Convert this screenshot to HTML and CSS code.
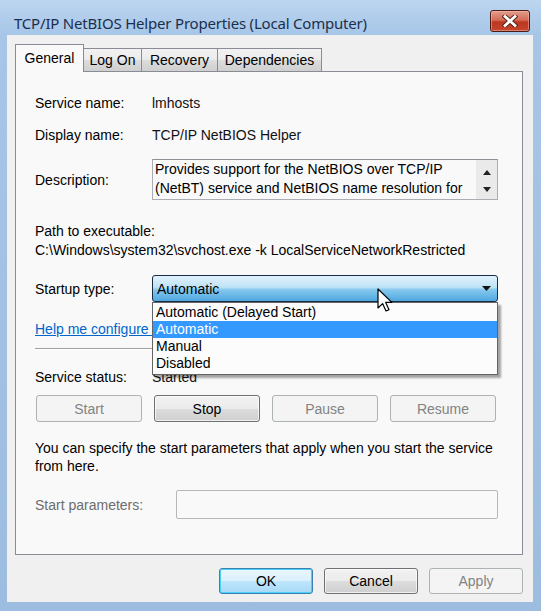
FILE: index.html
```html
<!DOCTYPE html>
<html>
<head>
<meta charset="utf-8">
<link rel="stylesheet" href="styles.css">
</head>
<body>
<div class="window">
  <div class="titlebar">
    <span class="title">TCP/IP NetBIOS Helper Properties (Local Computer)</span>
    <div class="close">
      <svg width="16" height="12" viewBox="0 0 16 12">
        <path d="M3 1.5 L13 10.5 M13 1.5 L3 10.5" stroke="#4a1e16" stroke-width="4.6" stroke-linecap="square"/>
        <path d="M3 1.5 L13 10.5 M13 1.5 L3 10.5" stroke="#ffffff" stroke-width="2.8" stroke-linecap="square"/>
      </svg>
    </div>
  </div>
  <div class="client">
    <div class="tabs">
      <div class="tab active">General</div>
      <div class="tab t-logon">Log On</div>
      <div class="tab t-recovery">Recovery</div>
      <div class="tab t-deps">Dependencies</div>
    </div>
    <div class="panel">
      <div class="row r-service">
        <span class="label">Service name:</span>
        <span class="value">lmhosts</span>
      </div>
      <div class="row r-display">
        <span class="label">Display name:</span>
        <span class="value">TCP/IP NetBIOS Helper</span>
      </div>
      <div class="row r-desc">
        <span class="label">Description:</span>
        <div class="descbox">
          <div class="desctext">Provides support for the NetBIOS over TCP/IP<br>(NetBT) service and NetBIOS name resolution for</div>
          <div class="vscroll">
            <svg width="8" height="5" viewBox="0 0 8 5"><path d="M0 5 L4 0 L8 5 Z" fill="#222"/></svg>
            <svg width="8" height="5" viewBox="0 0 8 5"><path d="M0 0 L4 5 L8 0 Z" fill="#222"/></svg>
          </div>
        </div>
      </div>
      <div class="pathblock">
        <div>Path to executable:</div>
        <div>C:\Windows\system32\svchost.exe -k LocalServiceNetworkRestricted</div>
      </div>
      <div class="row r-startup">
        <span class="label">Startup type:</span>
        <div class="combo">
          <span class="combo-text">Automatic</span>
          <svg class="combo-arrow" width="9" height="5" viewBox="0 0 9 5"><path d="M0 0 L4.5 5 L9 0 Z" fill="#111"/></svg>
          <div class="droplist">
            <div class="item">Automatic (Delayed Start)</div>
            <div class="item selected">Automatic</div>
            <div class="item">Manual</div>
            <div class="item">Disabled</div>
          </div>
          <svg class="cursor" width="16" height="25" viewBox="0 0 16 25">
            <path d="M1 1 L1 20 L5.6 15.6 L9 23 L12 21.7 L8.7 14.4 L14.8 14.4 Z" fill="#fff" stroke="#000" stroke-width="1.2" stroke-linejoin="round"/>
          </svg>
        </div>
      </div>
      <div class="helprow"><a class="help" href="#">Help me configure service startup options.</a></div>
      <div class="sep"></div>
      <div class="row r-status">
        <span class="label">Service status:</span>
        <span class="value">Started</span>
      </div>
      <div class="svcbuttons">
        <div class="btn disabled">Start</div>
        <div class="btn">Stop</div>
        <div class="btn disabled">Pause</div>
        <div class="btn disabled">Resume</div>
      </div>
      <p class="note">You can specify the start parameters that apply when you start the service from here.</p>
      <div class="row r-params">
        <span class="label dim">Start parameters:</span>
        <div class="paraminput"></div>
      </div>
    </div>
    <div class="actions">
      <div class="btn dlg default">OK</div>
      <div class="btn dlg">Cancel</div>
      <div class="btn dlg disabled">Apply</div>
    </div>
  </div>
</div>
</body>
</html>
```

FILE: styles.css
```css
* { box-sizing: border-box; }

html, body {
  margin: 0;
  padding: 0;
}

body {
  width: 541px;
  height: 611px;
  overflow: hidden;
  font-family: "Liberation Sans", Arial, sans-serif;
  font-size: 14px;
  color: #000;
}

.window {
  width: 541px;
  height: 611px;
  display: flex;
  flex-direction: column;
  padding: 0 8px 9px 7px;
  background: linear-gradient(180deg, #bcd5ef 0px, #a6c5e7 36px, #9dbde0 100%);
}

.titlebar {
  height: 35px;
  display: flex;
  justify-content: space-between;
  align-items: flex-start;
}

.title {
  margin-top: 13px;
  padding-left: 7px;
  font-family: "Noto Sans", "Open Sans", sans-serif;
  font-size: 15px;
  line-height: 20px;
  color: #1b2f4d;
  letter-spacing: -0.2px;
}

.close {
  margin-top: 10px;
  margin-right: 3px;
  width: 40px;
  height: 22px;
  border: 1px solid #4b1c14;
  border-radius: 3px;
  background: linear-gradient(180deg, #e39c8c 0%, #d46c57 45%, #bd3620 55%, #c6452c 100%);
  display: flex;
  align-items: center;
  justify-content: center;
  box-shadow: inset 0 0 0 1px rgba(255, 200, 190, 0.45);
}

.client {
  flex: 1;
  background: #f0f0f0;
  padding: 9px 10px 0 8px;
  display: flex;
  flex-direction: column;
}

.tabs {
  display: flex;
  align-items: flex-end;
  height: 28px;
  margin-bottom: -1px;
  position: relative;
  z-index: 2;
}

.tab {
  height: 24px;
  border: 1px solid #898c95;
  margin-left: -1px;
  background: linear-gradient(180deg, #f2f2f2 0%, #ebebeb 50%, #dddddd 51%, #cfcfcf 100%);
  display: flex;
  align-items: center;
  justify-content: center;
  font-size: 14px;
  color: #000;
}

.tab.active {
  margin-left: 0;
  height: 28px;
  width: 69px;
  border-bottom: none;
  background: #f9f9f9;
  padding-bottom: 2px;
  z-index: 2;
}

.t-logon { width: 59px; }
.t-recovery { width: 77px; }
.t-deps { width: 105px; }

.panel {
  height: 484px;
  border: 1px solid #898c95;
  background: #f9f9f9;
  padding: 20px 24px 0 19px;
  display: flex;
  flex-direction: column;
}

.row {
  display: flex;
  align-items: center;
}

.label {
  width: 117px;
  flex: none;
}

.label.dim {
  color: #6d6d6d;
  width: 141px;
}

.value {
  color: #111;
}

.r-service { height: 22px; }
.r-display { height: 22px; margin-top: 10px; }

.r-desc {
  margin-top: 13px;
  align-items: center;
}

.descbox {
  width: 346px;
  height: 41px;
  border: 1px solid #abadb3;
  border-top-color: #8e9096;
  background: #f9f9f9;
  display: flex;
  overflow: hidden;
}

.desctext {
  flex: 1;
  padding: 0 0 0 2px;
  line-height: 19px;
  white-space: nowrap;
  overflow: hidden;
}

.vscroll {
  width: 21px;
  background: #eaeaea;
  display: flex;
  flex-direction: column;
  align-items: center;
  justify-content: space-between;
  padding: 10px 0 7px;
}

.pathblock {
  margin-top: 22px;
  line-height: 19px;
}

.r-startup {
  margin-top: 15px;
}

.combo {
  position: relative;
  width: 346px;
  height: 27px;
  border: 1px solid #1c2c46;
  border-radius: 3px;
  background: linear-gradient(180deg, #e2f2fc 0%, #bde2f7 45%, #85c7ee 55%, #4fa9df 100%);
  display: flex;
  align-items: center;
  justify-content: space-between;
  padding: 0 6px 0 4px;
  z-index: 3;
}

.combo-text { color: #000; }

.droplist {
  position: absolute;
  top: 26px;
  left: -1px;
  width: 346px;
  height: 73px;
  background: #fcfcfc;
  border: 1px solid #646464;
  box-shadow: 3px 3px 2px rgba(0, 0, 0, 0.35);
  padding-top: 1px;
}

.item {
  height: 17px;
  line-height: 17px;
  padding-left: 3px;
  color: #000;
}

.item.selected {
  background: #3399ff;
  color: #fff;
}

.cursor {
  position: absolute;
  left: 224px;
  top: 12px;
}

.helprow {
  margin-top: 19px;
  line-height: 16px;
  white-space: nowrap;
}

.help {
  color: #0066cc;
  text-decoration: underline;
}

.sep {
  margin-top: 11px;
  height: 2px;
  border-top: 1px solid #a0a0a0;
  border-bottom: 1px solid #ffffff;
}

.r-status {
  margin-top: 19px;
  height: 16px;
}

.svcbuttons {
  margin-top: 10px;
  margin-left: 1px;
  display: grid;
  grid-template-columns: repeat(4, 106px);
  column-gap: 12px;
}

.btn {
  height: 27px;
  border: 1px solid #707070;
  border-radius: 3px;
  background: linear-gradient(180deg, #f2f2f2 0%, #ebebeb 50%, #dddddd 51%, #cfcfcf 100%);
  display: flex;
  align-items: center;
  justify-content: center;
  color: #000;
  box-shadow: inset 0 0 0 1px rgba(255, 255, 255, 0.7);
}

.btn.disabled {
  border-color: #adb2b5;
  background: #f4f4f4;
  color: #838383;
  box-shadow: none;
}

.note {
  margin: 17px 0 0;
  line-height: 18px;
}

.r-params {
  margin-top: 15px;
}

.paraminput {
  width: 322px;
  height: 29px;
  border: 1px solid #b8b8b8;
  border-radius: 2px;
  background: #f9f9f9;
}

.actions {
  margin-top: 13px;
  display: flex;
  justify-content: flex-end;
  gap: 11px;
}

.btn.dlg {
  width: 94px;
  height: 26px;
}

.btn.default {
  border-color: #3c7fb1;
  box-shadow: inset 0 0 0 1px #48d2f8;
  background: linear-gradient(180deg, #eaf6fd 0%, #d9f0fc 50%, #bee6fd 51%, #a7d9f5 100%);
}
```
